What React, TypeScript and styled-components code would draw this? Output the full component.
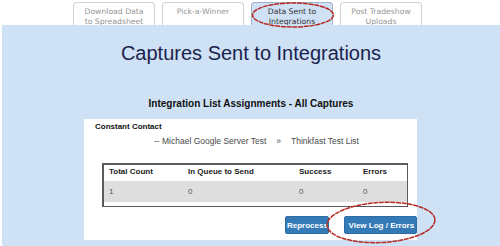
import React from "react";
import styled, { createGlobalStyle } from "styled-components";

const GlobalStyle = createGlobalStyle`
  body {
    margin: 0;
    background: #ffffff;
    font-family: "Liberation Sans", Arial, sans-serif;
  }
`;

const tabs = [
  { label: "Download Data\nto Spreadsheet", active: false },
  { label: "Pick-a-Winner", active: false },
  { label: "Data Sent to\nIntegrations", active: true },
  { label: "Post Tradeshow\nUploads", active: false },
];

const columns = [
  { label: "Total Count", width: 79 },
  { label: "In Queue to Send", width: 111 },
  { label: "Success", width: 64 },
  { label: "Errors", width: 49 },
];
const values = ["1", "0", "0", "0"];

export default function App() {
  return (
    <>
      <GlobalStyle />
      <Page>
        <TabBar>
          {tabs.map((tab) => (
            <Tab key={tab.label} $active={tab.active}>
              {tab.label}
            </Tab>
          ))}
        </TabBar>
        <Panel>
          <Title>Captures Sent to Integrations</Title>
          <Subtitle>Integration List Assignments - All Captures</Subtitle>
          <Card>
            <ProviderName>Constant Contact</ProviderName>
            <Assignment>
              -- Michael Google Server Test
              <Arrow>»</Arrow>
              Thinkfast Test List
            </Assignment>
            <TableBox>
              <StatsTable>
                <thead>
                  <tr>
                    {columns.map((c) => (
                      <Th key={c.label} $width={c.width}>
                        {c.label}
                      </Th>
                    ))}
                  </tr>
                </thead>
                <tbody>
                  <DataRow>
                    {values.map((v, i) => (
                      <Td key={i}>{v}</Td>
                    ))}
                  </DataRow>
                </tbody>
              </StatsTable>
            </TableBox>
            <Actions>
              <ActionButton $narrow>Reprocess</ActionButton>
              <ActionButton>View Log / Errors</ActionButton>
            </Actions>
          </Card>
        </Panel>
        {/* red annotation rings drawn over the screenshot */}
        <Marks viewBox="0 0 500 246" width="500" height="246">
          <ellipse cx="293" cy="15" rx="40.5" ry="12" />
          <ellipse cx="381" cy="222.5" rx="54" ry="20" transform="rotate(-3 381 222.5)" />
        </Marks>
      </Page>
    </>
  );
}

const Page = styled.div`
  position: relative;
  width: 500px;
  height: 246px;
  overflow: hidden;
  display: flex;
  flex-direction: column;
`;

const TabBar = styled.div`
  display: flex;
  gap: 7px;
  padding: 2px 0 0 73px;
  height: 23px;
  box-sizing: content-box;
`;

const Tab = styled.div<{ $active?: boolean }>`
  width: 82px;
  height: 23px;
  box-sizing: border-box;
  padding-top: 4px;
  border: 1px solid ${(p) => (p.$active ? "#a3b3c9" : "#d2d2d2")};
  border-bottom: none;
  border-radius: 4px 4px 0 0;
  background: ${(p) => (p.$active ? "#cfe1f5" : "#ffffff")};
  color: ${(p) => (p.$active ? "#333333" : "#959595")};
  font-family: "DejaVu Sans", Verdana, sans-serif;
  font-size: 7.7px;
  line-height: 9.5px;
  text-align: center;
  white-space: pre-line;
`;

const Panel = styled.div`
  flex: 1;
  margin-left: 2px;
  background: #cfe1f5;
  display: flex;
  flex-direction: column;
  align-items: center;
  padding-top: 16px;
`;

const Title = styled.h1`
  margin: 0;
  font-size: 20px;
  line-height: 24px;
  font-weight: normal;
  color: #1b1f4e;
`;

const Subtitle = styled.h2`
  margin: 33px 0 0;
  font-size: 10px;
  line-height: 12px;
  font-weight: bold;
  color: #111111;
`;

const Card = styled.div`
  align-self: flex-start;
  margin: 9px 0 0 82px;
  width: 333px;
  height: 121px;
  box-sizing: border-box;
  background: #ffffff;
  padding: 3px 0 0 11px;
  display: flex;
  flex-direction: column;
`;

const ProviderName = styled.div`
  font-size: 8px;
  line-height: 10px;
  font-weight: bold;
  color: #111111;
`;

const Assignment = styled.div`
  margin: 4px 0 0 59px;
  font-size: 8.5px;
  line-height: 11px;
  color: #4a4a4a;
  white-space: nowrap;
`;

const Arrow = styled.span`
  margin: 0 10px;
`;

const TableBox = styled.div`
  margin: 16px 0 0 7px;
  width: 306px;
  box-sizing: border-box;
  border: 1px solid #5a5a5a;
  border-left-width: 2px;
  border-top-width: 2px;
  padding-bottom: 4px;
`;

const StatsTable = styled.table`
  width: 303px;
  table-layout: fixed;
  border-collapse: collapse;
  font-size: 8px;
  color: #333333;
`;

const Th = styled.th<{ $width: number }>`
  width: ${(p) => p.$width}px;
  box-sizing: border-box;
  text-align: left;
  font-weight: bold;
  height: 16px;
  padding: 2px 0 0 5px;
  vertical-align: top;
  line-height: 10px;
  color: #222222;
`;

const DataRow = styled.tr`
  background: #dedede;
`;

const Td = styled.td`
  height: 21px;
  padding: 0 0 0 5px;
  color: #555555;
  line-height: 10px;
`;

const Actions = styled.div`
  display: flex;
  justify-content: flex-end;
  gap: 15px;
  margin-top: 9px;
`;

const ActionButton = styled.button<{ $narrow?: boolean }>`
  height: 18px;
  padding: 0 ${(p) => (p.$narrow ? "1px" : "3.5px")};
  width: ${(p) => (p.$narrow ? "44px" : "73px")};
  overflow: hidden;
  white-space: nowrap;
  background: #337ab7;
  border: 1px solid #2e6da4;
  border-radius: 2px;
  color: #ffffff;
  font-family: "Liberation Sans", Arial, sans-serif;
  font-size: 8px;
  font-weight: bold;
`;

const Marks = styled.svg`
  position: absolute;
  left: 0;
  top: 0;
  pointer-events: none;
  fill: none;
  stroke: #b52a22;
  stroke-width: 1.5;
  stroke-dasharray: 5 0.7;
`;
